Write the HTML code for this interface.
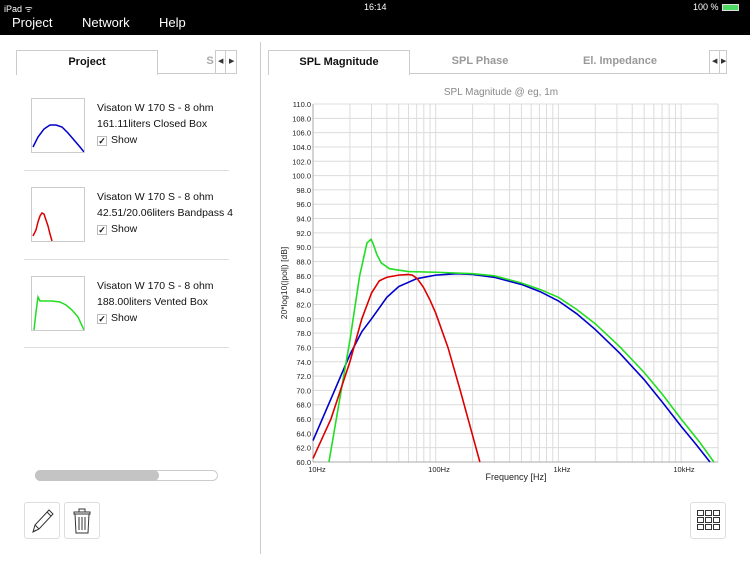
<!DOCTYPE html>
<html><head><meta charset="utf-8"><style>
*{margin:0;padding:0;box-sizing:border-box}
body{width:750px;height:563px;background:#fff;font-family:"Liberation Sans",Arial,sans-serif;position:relative;overflow:hidden;color:#111}
.abs{position:absolute}
.bar{left:0;top:0;width:750px;height:35px;background:#000;color:#fff}
.tab{position:absolute;top:50px;height:24px;border:1px solid #ccc;border-bottom:none;background:#fff;font-size:11px;font-weight:bold;text-align:center;line-height:23px}
.itab{position:absolute;top:50px;height:24px;font-size:11px;font-weight:bold;color:#999;text-align:center;line-height:23px}
.arr{position:absolute;top:50px;height:24px;border:1px solid #ccc;font-size:7px;color:#333;line-height:22px}
.sep{position:absolute;left:24px;width:205px;height:1px;background:#ddd}
.thumb{position:absolute;left:31px;width:54px;height:55px;border:1px solid #ccc}
.txt{position:absolute;left:97px;font-size:10.5px;line-height:16px;color:#111}
.cb{display:inline-block;width:10px;height:10px;border:1px solid #bbb;font-size:9px;line-height:9px;text-align:center;vertical-align:-1px;margin-right:4px;font-weight:bold}
.btn{position:absolute;top:502px;width:36px;height:37px;border:1px solid #ddd;border-radius:3px;background:#fff}
</style></head><body>
<div class="abs bar">
 <div class="abs" style="left:4px;top:2px;font-size:9px">iPad ᯤ</div>
 <div class="abs" style="left:364px;top:2px;font-size:9px">16:14</div>
 <div class="abs" style="left:693px;top:2px;font-size:9px">100 %</div>
 <div class="abs" style="left:722px;top:4px;width:17px;height:7px;background:#4cd964;border:1px solid #ddd"></div>
 <div class="abs" style="left:12px;top:15px;font-size:13px">Project</div>
 <div class="abs" style="left:82px;top:15px;font-size:13px">Network</div>
 <div class="abs" style="left:159px;top:15px;font-size:13px">Help</div>
</div>
<div class="abs" style="left:260px;top:42px;width:1px;height:512px;background:#ccc"></div>

<div class="abs" style="left:16px;top:73px;width:221px;height:1px;background:#ccc"></div>
<div class="tab" style="left:16px;width:142px;height:25px">Project</div>
<div class="itab" style="left:205px;width:10px;color:#aaa">S</div>
<div class="arr" style="left:215px;width:11px;padding-left:2px">◀</div>
<div class="arr" style="left:225px;width:12px;padding-left:3px">▶</div>

<div class="abs" style="left:268px;top:73px;width:458px;height:1px;background:#ccc"></div>
<div class="tab" style="left:268px;width:142px;height:25px">SPL Magnitude</div>
<div class="itab" style="left:410px;width:140px">SPL Phase</div>
<div class="itab" style="left:550px;width:140px">El. Impedance</div>
<div class="arr" style="left:709px;width:11px;padding-left:2px">◀</div>
<div class="arr" style="left:719px;width:8px;padding-left:1px">▶</div>

<div class="thumb" style="top:98px"><svg width="52" height="53"><polyline fill="none" stroke="#0000cc" stroke-width="1.5" points="1,48 6,38 12,30 18,26 24,26 30,28 36,34 42,41 48,48 52,53"/></svg></div>
<div class="txt" style="top:100px">Visaton W 170 S - 8 ohm<br>161.11liters Closed Box<br><span class="cb">✓</span>Show</div>
<div class="sep" style="top:170px"></div>
<div class="thumb" style="top:187px"><svg width="52" height="53"><polyline fill="none" stroke="#dd0000" stroke-width="1.5" points="1,48 4,42 6,34 8,28 10,25 12,26 14,32 16,38 18,46 20,53"/></svg></div>
<div class="txt" style="top:189px">Visaton W 170 S - 8 ohm<br>42.51/20.06liters Bandpass 4<br><span class="cb">✓</span>Show</div>
<div class="sep" style="top:259px"></div>
<div class="thumb" style="top:276px"><svg width="52" height="53"><polyline fill="none" stroke="#22dd22" stroke-width="1.5" points="2,53 4,35 6,20 8,24 12,24 20,24 28,25 34,28 40,33 46,40 52,53"/></svg></div>
<div class="txt" style="top:278px">Visaton W 170 S - 8 ohm<br>188.00liters Vented Box<br><span class="cb">✓</span>Show</div>
<div class="sep" style="top:347px"></div>

<div class="abs" style="left:35px;top:470px;width:183px;height:11px;border:1px solid #ccc;border-radius:6px;background:#fff"></div>
<div class="abs" style="left:35px;top:470px;width:124px;height:11px;border-radius:6px;background:#c4c4c4"></div>

<div class="btn" style="left:24px"><svg width="34" height="35"><g fill="none" stroke="#333" stroke-width="1"><path d="M8 29 L10 22 L24 7 L28 11 L14 26 Z M10 22 L14 26 M22 9 L26 13 M8 29 L11 27"/></g></svg></div>
<div class="btn" style="left:64px"><svg width="34" height="35"><g fill="none" stroke="#333" stroke-width="1"><rect x="9" y="9" width="16" height="2"/><rect x="14" y="6" width="6" height="3"/><path d="M10 11 L11 30 H23 L24 11 M14 14 V27 M17 14 V27 M20 14 V27"/></g></svg></div>
<div class="btn" style="left:690px"><svg width="34" height="35"><g fill="none" stroke="#333" stroke-width="1"><rect x="6.5" y="7.5" width="6" height="5"/><rect x="14.5" y="7.5" width="6" height="5"/><rect x="22.5" y="7.5" width="6" height="5"/><rect x="6.5" y="14.5" width="6" height="5"/><rect x="14.5" y="14.5" width="6" height="5"/><rect x="22.5" y="14.5" width="6" height="5"/><rect x="6.5" y="21.5" width="6" height="5"/><rect x="14.5" y="21.5" width="6" height="5"/><rect x="22.5" y="21.5" width="6" height="5"/></g></svg></div>

<svg class="abs" style="left:0;top:0" width="750" height="563" font-family="Liberation Sans, Arial, sans-serif">
<text x="501" y="95" font-size="10" fill="#888" text-anchor="middle">SPL Magnitude @ eg, 1m</text>
<g transform="translate(313 104) scale(122.7 -7.16) translate(-1 -110)" fill="none">
<path vector-effect="non-scaling-stroke" stroke="#dcdcdc" stroke-width="1" d="M1.301 60V110M1.477 60V110M1.602 60V110M1.699 60V110M1.778 60V110M1.845 60V110M1.903 60V110M1.954 60V110M2 60V110M2.301 60V110M2.477 60V110M2.602 60V110M2.699 60V110M2.778 60V110M2.845 60V110M2.903 60V110M2.954 60V110M3 60V110M3.301 60V110M3.477 60V110M3.602 60V110M3.699 60V110M3.778 60V110M3.845 60V110M3.903 60V110M3.954 60V110M4 60V110M4.301 60V110M1 62H4.301M1 64H4.301M1 66H4.301M1 68H4.301M1 70H4.301M1 72H4.301M1 74H4.301M1 76H4.301M1 78H4.301M1 80H4.301M1 82H4.301M1 84H4.301M1 86H4.301M1 88H4.301M1 90H4.301M1 92H4.301M1 94H4.301M1 96H4.301M1 98H4.301M1 100H4.301M1 102H4.301M1 104H4.301M1 106H4.301M1 108H4.301M1 110H4.301"/>
<path vector-effect="non-scaling-stroke" stroke="#aaa" stroke-width="1" d="M1 60V110M1 60H4.301"/>
<polyline vector-effect="non-scaling-stroke" stroke="#0000cc" stroke-width="1.6" points="1,63 1.176,70 1.301,75 1.398,78.2 1.477,80 1.602,83 1.699,84.5 1.845,85.6 2,86.1 2.176,86.3 2.301,86.2 2.477,85.8 2.699,84.8 2.85,83.8 3,82.5 3.15,80.7 3.301,78.5 3.5,75.2 3.699,71.5 3.85,68.3 4,65 4.12,62.5 4.235,60"/>
<polyline vector-effect="non-scaling-stroke" stroke="#22dd22" stroke-width="1.6" points="1.130,60 1.230,70 1.301,77 1.380,86 1.44,90.6 1.473,91.1 1.49,90.5 1.52,89 1.556,87.8 1.623,87 1.778,86.6 2,86.5 2.301,86.3 2.477,86 2.699,85 2.85,84.1 3,83 3.15,81.3 3.301,79.3 3.5,76.1 3.699,72.5 3.85,69.4 4,66 4.15,62.8 4.267,60"/>
<polyline vector-effect="non-scaling-stroke" stroke="#dd0000" stroke-width="1.6" points="1,60.5 1.146,66 1.301,74 1.398,80 1.477,83.6 1.540,85.3 1.602,85.8 1.699,86.1 1.778,86.2 1.81,86.1 1.85,85.6 1.90,84.4 1.954,82.6 2,80.8 2.1,76 2.2,70 2.28,65 2.36,60"/>
</g>
<g font-size="7.5" fill="#222" text-anchor="end">
<text x="311" y="107">110.0</text><text x="311" y="121.3">108.0</text><text x="311" y="135.6">106.0</text><text x="311" y="150">104.0</text><text x="311" y="164.3">102.0</text><text x="311" y="178.6">100.0</text><text x="311" y="192.9">98.0</text><text x="311" y="207.2">96.0</text><text x="311" y="221.6">94.0</text><text x="311" y="235.9">92.0</text><text x="311" y="250.2">90.0</text><text x="311" y="264.5">88.0</text><text x="311" y="278.8">86.0</text><text x="311" y="293.2">84.0</text><text x="311" y="307.5">82.0</text><text x="311" y="321.8">80.0</text><text x="311" y="336.1">78.0</text><text x="311" y="350.4">76.0</text><text x="311" y="364.8">74.0</text><text x="311" y="379.1">72.0</text><text x="311" y="393.4">70.0</text><text x="311" y="407.7">68.0</text><text x="311" y="422">66.0</text><text x="311" y="436.4">64.0</text><text x="311" y="450.7">62.0</text><text x="311" y="465">60.0</text>
</g>
<g font-size="7.5" fill="#222" text-anchor="middle">
<text x="317" y="472">10Hz</text><text x="439" y="472">100Hz</text><text x="562" y="472">1kHz</text><text x="684" y="472">10kHz</text>
</g>
<text x="516" y="480" font-size="9" fill="#222" text-anchor="middle">Frequency [Hz]</text>
<text transform="translate(287 283) rotate(-90)" font-size="8.5" fill="#222" text-anchor="middle">20*log10(|pol|) [dB]</text>
</svg>
</body></html>
